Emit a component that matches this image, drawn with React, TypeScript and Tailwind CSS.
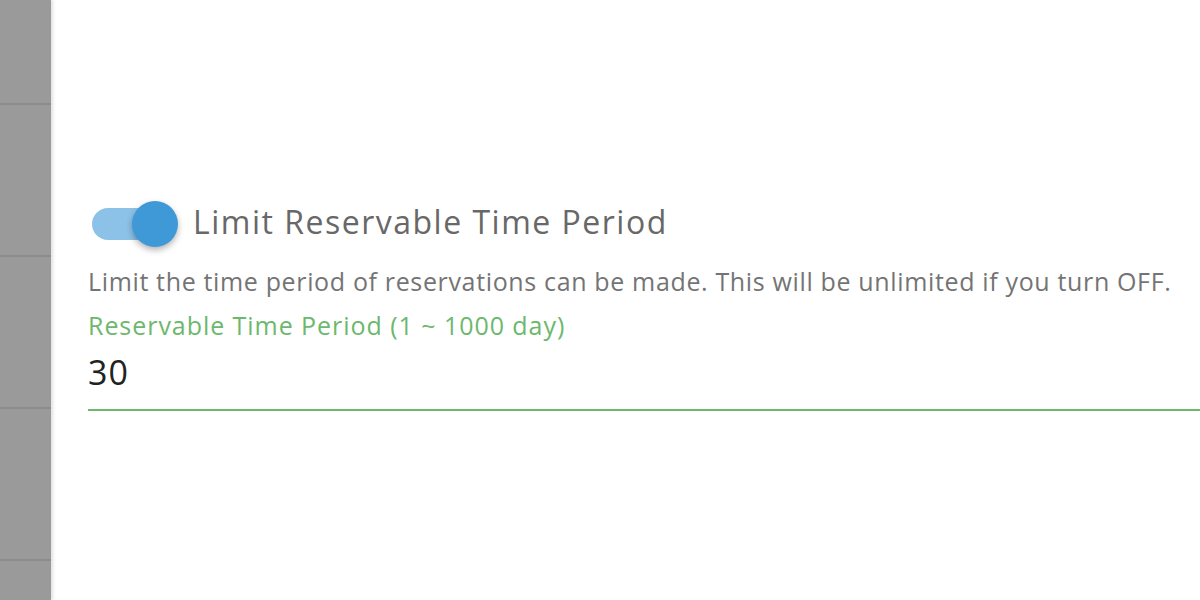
export default function App() {
  return (
    <div className="flex h-[600px] w-[1200px] overflow-hidden bg-white" style={{ fontFamily: '"Open Sans", "Noto Sans", sans-serif' }}>
      <div className="relative z-10 flex w-[51px] shrink-0 flex-col bg-[#9a9a9a] shadow-[2px_0_3px_rgba(0,0,0,0.12)]">
        <div className="h-[105px] shrink-0 border-b-2 border-[#8c8c8c]" />
        <div className="h-[152px] shrink-0 border-b-2 border-[#8c8c8c]" />
        <div className="h-[152px] shrink-0 border-b-2 border-[#8c8c8c]" />
        <div className="h-[152px] shrink-0 border-b-2 border-[#8c8c8c]" />
        <div className="flex-1" />
      </div>
      <div className="flex-1 pl-[37px] pt-[200px]">
        <div className="flex items-start">
          <div className="relative mt-[1px] h-[46px] w-[90px] shrink-0">
            <div className="absolute left-[4px] top-[7px] h-[32px] w-[78px] rounded-full bg-[#8cc2e8]" />
            <div className="absolute left-[44px] top-0 h-[46px] w-[46px] rounded-full bg-[#3f99d7] shadow-[0_3px_6px_rgba(0,0,0,0.3)]" />
          </div>
          <span className="ml-[15px] mt-[2px] text-[32px] leading-[40px] tracking-[1.5px] text-[#686868]">Limit Reservable Time Period</span>
        </div>
        <p className="mt-[19px] text-[25px] leading-[30px] tracking-[0.65px] text-[#747474]">
          Limit the time period of reservations can be made. This will be unlimited if you turn OFF.
        </p>
        <div className="mt-[14px] border-b-2 border-[#6cb86c]">
          <div className="text-[25px] leading-[30px] tracking-[0.95px] text-[#6cb86c]">Reservable Time Period (1 ~ 1000 day)</div>
          <div className="mt-[12px] pb-[17px] text-[34px] leading-[40px] tracking-[1px] text-[#222]">30</div>
        </div>
      </div>
    </div>
  );
}
